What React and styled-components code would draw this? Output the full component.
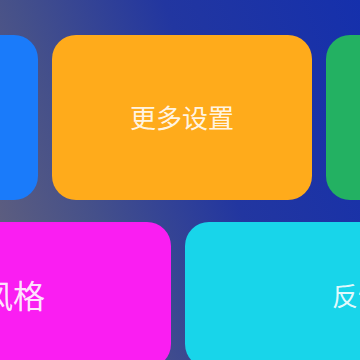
import React from "react";
import styled, { createGlobalStyle } from "styled-components";

const Global = createGlobalStyle`
  html, body { margin: 0; padding: 0; }
  body { font-family: "Noto Sans CJK SC", "Noto Sans", sans-serif; }
`;

const Screen = styled.div`
  width: 360px;
  height: 360px;
  overflow: hidden;
  box-sizing: border-box;
  padding-top: 35px;
  display: flex;
  flex-direction: column;
  gap: 22px;
  background: linear-gradient(70deg, #68647a 0%, #45508a 30%, #2236a0 60%, #1530ac 100%);
`;

const Row = styled.div`
  display: flex;
  gap: 14px;
  margin-left: ${(p) => p.$offset}px;
  height: ${(p) => p.$h}px;
  flex-shrink: 0;
`;

const Tile = styled.div`
  flex: 0 0 ${(p) => p.$w}px;
  height: 100%;
  border-radius: 24px;
  background: ${(p) => p.$bg};
  display: flex;
  align-items: center;
  justify-content: center;
  color: rgba(255, 255, 255, 0.9);
  font-size: ${(p) => p.$fs || 26}px;
  white-space: nowrap;
  padding-bottom: 2px;
  box-sizing: border-box;
`;

export default function App() {
  return (
    <>
      <Global />
      <Screen>
        <Row $offset={-222} $h={165}>
          <Tile $w={260} $bg="#1a7bfa">常用功能</Tile>
          <Tile $w={260} $bg="#ffab1b">更多设置</Tile>
          <Tile $w={260} $bg="#23b162">数据统计</Tile>
        </Row>
        <Row $offset={-209} $h={146}>
          <Tile $w={380} $bg="#fa1ef2" $fs={32}>主题风格</Tile>
          <Tile $w={346} $bg="#18d5ea">反馈</Tile>
        </Row>
      </Screen>
    </>
  );
}
